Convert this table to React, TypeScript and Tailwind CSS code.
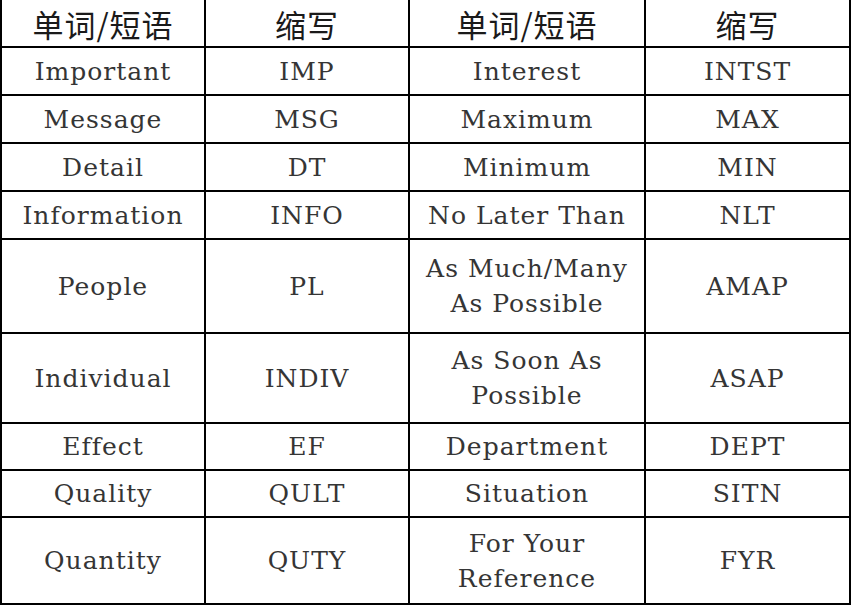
import React from "react";

const rows: { cells: string[][]; h: string }[] = [
  { cells: [["Important"], ["IMP"], ["Interest"], ["INTST"]], h: "h-[48px]" },
  { cells: [["Message"], ["MSG"], ["Maximum"], ["MAX"]], h: "h-[48px]" },
  { cells: [["Detail"], ["DT"], ["Minimum"], ["MIN"]], h: "h-[48px]" },
  { cells: [["Information"], ["INFO"], ["No Later Than"], ["NLT"]], h: "h-[48px]" },
  { cells: [["People"], ["PL"], ["As Much/Many", "As Possible"], ["AMAP"]], h: "h-[94px]" },
  { cells: [["Individual"], ["INDIV"], ["As Soon As", "Possible"], ["ASAP"]], h: "h-[90px]" },
  { cells: [["Effect"], ["EF"], ["Department"], ["DEPT"]], h: "h-[47px]" },
  { cells: [["Quality"], ["QULT"], ["Situation"], ["SITN"]], h: "h-[47px]" },
  { cells: [["Quantity"], ["QUTY"], ["For Your", "Reference"], ["FYR"]], h: "h-[87px]" },
];

const widths = ["w-[206px] border-l-2", "w-[204px]", "w-[236px]", "w-[205px]"];

export default function App() {
  return (
    <div className="w-[852px] h-[606px] bg-white overflow-hidden">
      <div className="flex flex-col">
        <div className="flex h-[48px]">
          {["单词/短语", "缩写", "单词/短语", "缩写"].map((t, i) => (
            <div
              key={i}
              className={`${widths[i]} border-r-2 border-b-2 border-black flex items-center justify-center text-[31px] font-normal text-[#1a1a1a] tracking-[1px] leading-none font-['Noto_Sans_CJK_SC',sans-serif]`}
            >
              {t}
            </div>
          ))}
        </div>
        {rows.map((r, ri) => (
          <div key={ri} className={`flex ${r.h}`}>
            {r.cells.map((lines, ci) => (
              <div
                key={ci}
                className={`${widths[ci]} border-r-2 border-b-2 border-black flex flex-col items-center justify-center text-[25px] leading-[35px] tracking-[1px] text-[#353535] font-['DejaVu_Serif',serif]`}
              >
                {lines.map((l, li) => (
                  <span key={li}>{l}</span>
                ))}
              </div>
            ))}
          </div>
        ))}
      </div>
    </div>
  );
}
